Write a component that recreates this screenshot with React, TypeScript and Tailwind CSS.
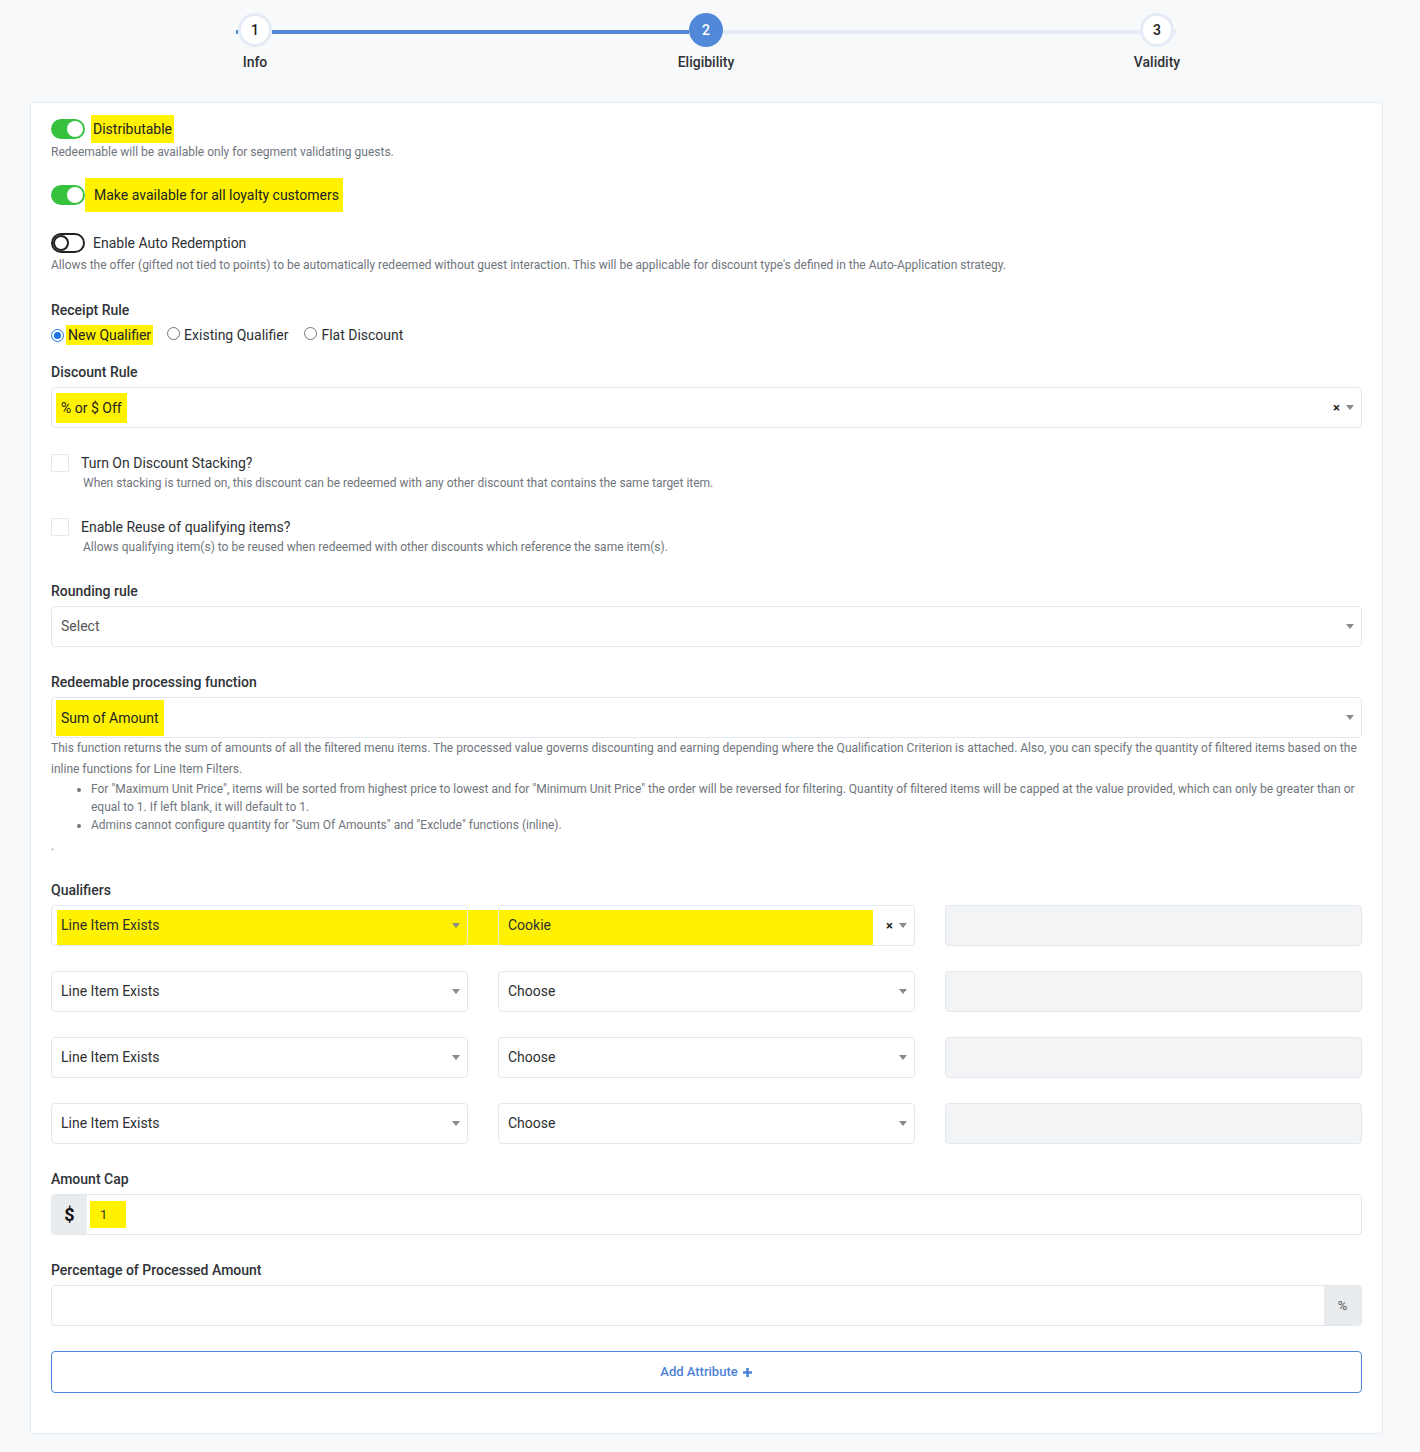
const font = { fontFamily: 'Roboto, "Noto Sans", sans-serif' };

const Caret = ({ className = "" }: { className?: string }) => (
  <span
    className={`inline-block w-0 h-0 border-l-[4px] border-r-[4px] border-t-[5px] border-l-transparent border-r-transparent border-t-[#8a8a8a] ${className}`}
  />
);

const Clear = () => (
  <span className="text-[13px] font-bold text-[#222] leading-none mr-[6px]">×</span>
);

const Toggle = ({ on }: { on: boolean }) =>
  on ? (
    <span className="relative inline-flex w-[34px] h-[20px] rounded-full bg-[#36c13f] shrink-0">
      <span className="absolute right-[2px] top-[2px] w-[16px] h-[16px] rounded-full bg-white" />
    </span>
  ) : (
    <span className="relative inline-flex w-[34px] h-[20px] rounded-full border-2 border-[#222] bg-white shrink-0">
      <span className="absolute left-0 top-0 w-[16px] h-[16px] rounded-full border-2 border-[#222]" />
    </span>
  );

const Radio = ({ checked }: { checked?: boolean }) => (
  <span
    className={`inline-flex items-center justify-center w-[13px] h-[13px] rounded-full shrink-0 ${
      checked ? "border-[1.5px] border-[#1a73e8]" : "border border-[#767676]"
    }`}
  >
    {checked && <span className="w-[7px] h-[7px] rounded-full bg-[#1a73e8]" />}
  </span>
);

const Label = ({ children, className = "" }: { children: React.ReactNode; className?: string }) => (
  <div className={`text-[14px] leading-[20px] font-medium text-[#2f3237] ${className}`}>{children}</div>
);

const Hint = ({ children, className = "" }: { children: React.ReactNode; className?: string }) => (
  <div className={`text-[12px] leading-[16px] text-[#70757c] ${className}`}>{children}</div>
);

const SelectBox = ({
  children,
  clear,
  className = "",
}: {
  children?: React.ReactNode;
  clear?: boolean;
  className?: string;
}) => (
  <div
    className={`h-[41px] flex items-center border border-[#e3e7ee] rounded-[4px] pl-[4px] pr-[7px] text-[14px] text-[#2d2f33] ${className}`}
  >
    <div className="flex-1 flex items-center h-full">{children}</div>
    {clear && <Clear />}
    <Caret />
  </div>
);

const Step = ({ n, label, active }: { n: number; label: string; active?: boolean }) => (
  <div className="flex flex-col items-center w-[34px] shrink-0">
    <div
      className={`w-[34px] h-[34px] rounded-full flex items-center justify-center text-[14px] font-medium ${
        active ? "bg-[#5288d8] text-white" : "bg-white border-[3px] border-[#e4ebf6] text-[#222]"
      }`}
    >
      {n}
    </div>
    <div className="mt-[5px] whitespace-nowrap text-[14px] leading-[20px] font-medium text-[#2f3237]">{label}</div>
  </div>
);

const QualifierRow = ({ first }: { first?: boolean }) => (
  <div className="relative grid grid-cols-3 gap-[30px]">
    {first && <div className="absolute left-[6px] top-[5px] w-[816px] h-[35px] bg-[#fff200]" />}
    <SelectBox className="relative bg-transparent">
      <span className="pl-[5px]">Line Item Exists</span>
    </SelectBox>
    <SelectBox className="relative bg-transparent" clear={first}>
      <span className="pl-[5px]">{first ? "Cookie" : "Choose"}</span>
    </SelectBox>
    <div className="h-[41px] border border-[#e3e7ee] rounded-[4px] bg-[#f3f4f6]" />
  </div>
);

export default function App() {
  return (
    <div className="min-h-[1452px] bg-[#f8f9fb] pb-[18px]" style={font}>
      {/* wizard steps */}
      <div className="flex items-start pt-[13px] pl-[236px]">
        <div className="w-[2px] h-[4px] mt-[17px] bg-[#5288d8]" />
        <Step n={1} label="Info" />
        <div className="w-[417px] h-[4px] mt-[17px] bg-[#5288d8]" />
        <Step n={2} label="Eligibility" active />
        <div className="w-[417px] h-[4px] mt-[17px] bg-[#e4ebf6]" />
        <Step n={3} label="Validity" />
        <div className="w-[2px] h-[4px] mt-[17px] bg-[#e4ebf6]" />
      </div>

      <div className="ml-[30px] mt-[30px] w-[1353px] bg-white border border-[#e5eaf2] rounded-[4px] px-[20px] pt-[12px] pb-[40px]">
        <div className="flex items-center">
          <Toggle on />
          <span className="ml-[6px] bg-[#fff200] px-[2px] py-[4px] text-[14px] leading-[20px] text-[#222]">
            Distributable
          </span>
        </div>
        <Hint className="mt-[1px]">Redeemable will be available only for segment validating guests.</Hint>

        <div className="flex items-center mt-[18px]">
          <Toggle on />
          <span className="bg-[#fff200] pl-[9px] pr-[4px] py-[7px] text-[14px] leading-[20px] text-[#222]">
            Make available for all loyalty customers
          </span>
        </div>

        <div className="flex items-center mt-[21px]">
          <Toggle on={false} />
          <span className="ml-[8px] text-[14px] leading-[20px] text-[#2d2f33]">Enable Auto Redemption</span>
        </div>
        <Hint className="mt-[4px]">
          Allows the offer (gifted not tied to points) to be automatically redeemed without guest interaction. This
          will be applicable for discount type's defined in the Auto-Application strategy.
        </Hint>

        <Label className="mt-[27px]">Receipt Rule</Label>
        <div className="flex items-center mt-[5px] text-[14px] leading-[20px] text-[#2d2f33]">
          <Radio checked />
          <span className="ml-[2px] bg-[#fff200] px-[2px] text-[#222]">New Qualifier</span>
          <span className="ml-[14px]">
            <Radio />
          </span>
          <span className="ml-[4px]">Existing Qualifier</span>
          <span className="ml-[16px]">
            <Radio />
          </span>
          <span className="ml-[4px]">Flat Discount</span>
        </div>

        <Label className="mt-[17px]">Discount Rule</Label>
        <SelectBox className="mt-[5px]" clear>
          <span className="bg-[#fff200] px-[5px] py-[5px] leading-[20px] text-[#222]">% or $ Off</span>
        </SelectBox>

        <div className="flex items-center mt-[25px]">
          <span className="w-[18px] h-[18px] border border-[#e3e7ee] rounded-[2px] shrink-0" />
          <span className="ml-[12px] text-[14px] leading-[20px] text-[#2d2f33]">Turn On Discount Stacking?</span>
        </div>
        <Hint className="ml-[32px] mt-[2px]">
          When stacking is turned on, this discount can be redeemed with any other discount that contains the same
          target item.
        </Hint>

        <div className="flex items-center mt-[26px]">
          <span className="w-[18px] h-[18px] border border-[#e3e7ee] rounded-[2px] shrink-0" />
          <span className="ml-[12px] text-[14px] leading-[20px] text-[#2d2f33]">
            Enable Reuse of qualifying items?
          </span>
        </div>
        <Hint className="ml-[32px] mt-[2px]">
          Allows qualifying item(s) to be reused when redeemed with other discounts which reference the same item(s).
        </Hint>

        <Label className="mt-[26px]">Rounding rule</Label>
        <SelectBox className="mt-[5px]">
          <span className="pl-[5px] text-[#555]">Select</span>
        </SelectBox>

        <Label className="mt-[25px]">Redeemable processing function</Label>
        <SelectBox className="mt-[5px]">
          <span className="bg-[#fff200] px-[5px] py-[8px] leading-[20px] text-[#222]">Sum of Amount</span>
        </SelectBox>
        <div className="text-[12px] leading-[21px] text-[#70757c]">
          This function returns the sum of amounts of all the filtered menu items. The processed value governs
          discounting and earning depending where the Qualification Criterion is attached. Also, you can specify the
          quantity of filtered items based on the inline functions for Line Item Filters.
        </div>
        <ul className="list-disc pl-[40px] text-[12px] leading-[18px] text-[#70757c]">
          <li>
            For "Maximum Unit Price", items will be sorted from highest price to lowest and for "Minimum Unit Price"
            the order will be reversed for filtering. Quantity of filtered items will be capped at the value provided,
            which can only be greater than or equal to 1. If left blank, it will default to 1.
          </li>
          <li>Admins cannot configure quantity for "Sum Of Amounts" and "Exclude" functions (inline).</li>
        </ul>
        <div className="mt-[3px] text-[12px] leading-[18px] text-[#70757c]">.</div>

        <Label className="mt-[25px]">Qualifiers</Label>
        <div className="mt-[5px] flex flex-col gap-[25px]">
          <QualifierRow first />
          <QualifierRow />
          <QualifierRow />
          <QualifierRow />
        </div>

        <Label className="mt-[25px]">Amount Cap</Label>
        <div className="mt-[5px] flex h-[41px] border border-[#e3e7ee] rounded-[4px] overflow-hidden">
          <div className="w-[35px] bg-[#e9ecef] flex items-center justify-center text-[18px] font-bold text-[#111]">
            $
          </div>
          <div className="flex-1 flex items-center pl-[3px]">
            <span className="bg-[#fff200] w-[36px] h-[27px] pl-[10px] flex items-center text-[13px] text-[#333]">
              1
            </span>
          </div>
        </div>

        <Label className="mt-[25px]">Percentage of Processed Amount</Label>
        <div className="mt-[5px] flex h-[41px] border border-[#e3e7ee] rounded-[4px] overflow-hidden">
          <div className="flex-1" />
          <div className="w-[37px] bg-[#e9ecef] flex items-center justify-center text-[13px] text-[#555]">%</div>
        </div>

        <button className="mt-[25px] w-full h-[42px] border-[1.5px] border-[#4d83d6] rounded-[4px] bg-white flex items-center justify-center text-[13px] font-medium text-[#4d83d6]">
          Add Attribute
          <svg width="11" height="11" viewBox="0 0 11 11" className="ml-[4px]">
            <path d="M5.5 1v9M1 5.5h9" stroke="#4d83d6" strokeWidth="2.6" />
          </svg>
        </button>
      </div>
    </div>
  );
}
